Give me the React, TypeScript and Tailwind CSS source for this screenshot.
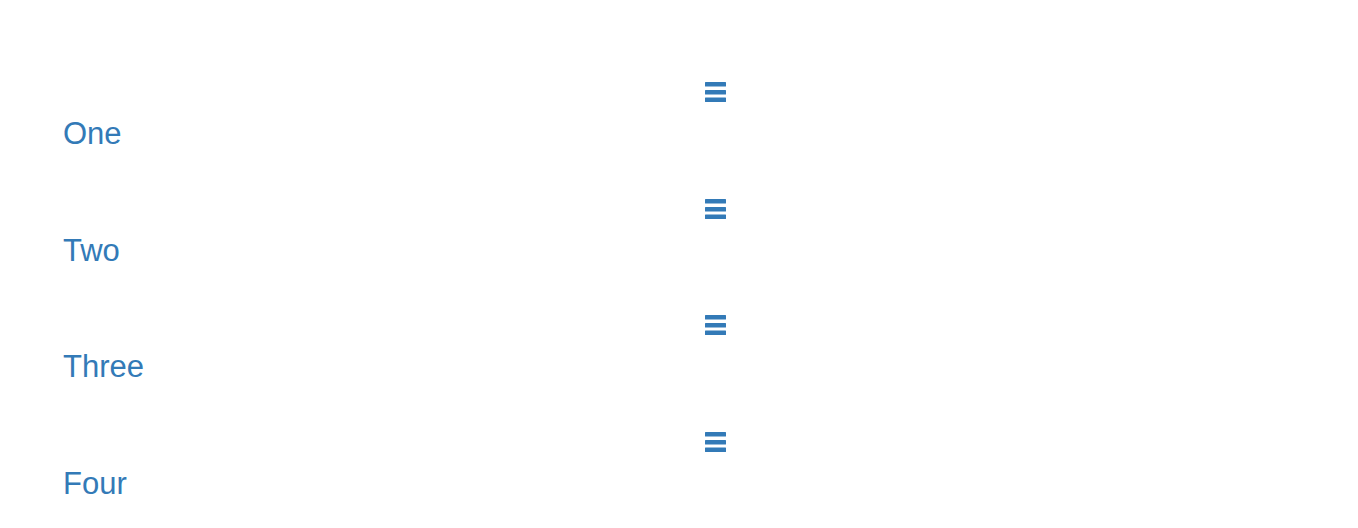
const items = ['One', 'Two', 'Three', 'Four'];

function Handle() {
  return (
    <svg width="21" height="20" viewBox="0 0 21 20" fill="#337ab7">
      <rect x="0" y="0" width="21" height="4.5" rx="0.5" />
      <rect x="0" y="8" width="21" height="4.5" rx="0.5" />
      <rect x="0" y="15.5" width="21" height="4.5" rx="0.5" />
    </svg>
  );
}

export default function App() {
  return (
    <div className="bg-white min-h-[528px] w-full pt-[82px] pl-[63px] font-['Liberation_Sans',Arial,sans-serif] text-[#337ab7]">
      <ul className="flex flex-col">
        {items.map((label) => (
          <li key={label} className="flex flex-col mb-[47.7px]">
            <span className="ml-[642px] mb-[15px] h-[20px] cursor-move">
              <Handle />
            </span>
            <a href="#" className="h-[34px] text-[31px] leading-[34px] w-fit">
              {label}
            </a>
          </li>
        ))}
      </ul>
    </div>
  );
}
